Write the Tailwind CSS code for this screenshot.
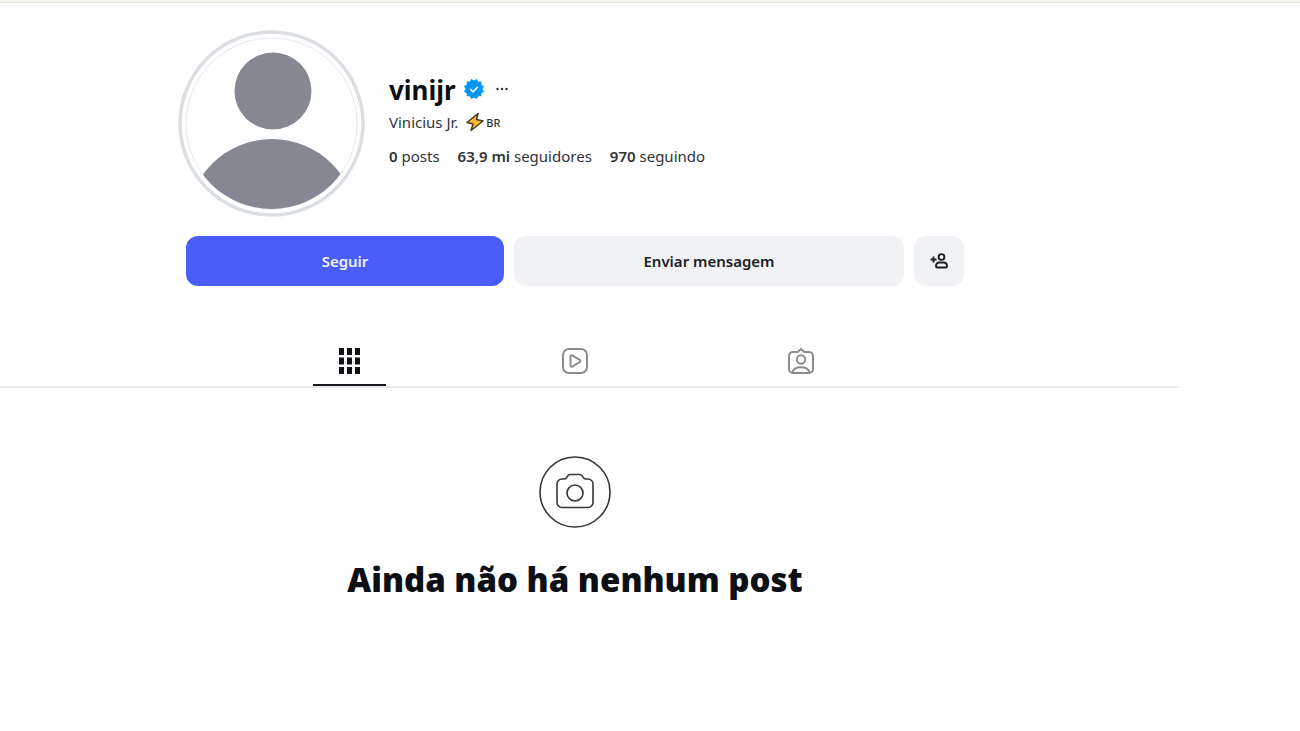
<!DOCTYPE html>
<html lang="pt-BR">
<head>
  <meta charset="UTF-8" />
  <meta name="viewport" content="width=device-width, initial-scale=1.0"/>
  <title>vinijr</title>
  <script src="https://cdn.jsdelivr.net/npm/@tailwindcss/browser@4"></script>
</head>
<body class="bg-white min-h-screen font-['Noto_Sans','Open_Sans',sans-serif] text-[#0c1014]">

  <div class="h-[3px] bg-[#f7f8f0] border-b border-[#e6e8dd]"></div>

  <!-- Profile header -->
  <header class="mr-[150px] pt-[27px]">
    <div class="max-w-[778px] mx-auto">
      <div class="flex gap-6 -ml-2">
        <svg class="w-[187px] h-[187px] shrink-0" viewBox="0 0 187 187" role="img" aria-label="Foto do perfil">
          <defs>
            <clipPath id="face"><circle cx="93.5" cy="93.5" r="85.5" /></clipPath>
          </defs>
          <circle cx="93.5" cy="93.5" r="91.5" fill="#fff" stroke="#dbdfe4" stroke-width="3.5" />
          <circle cx="93.5" cy="93.5" r="85.5" fill="none" stroke="#e6e8eb" stroke-width="1" />
          <circle cx="95" cy="61" r="38.5" fill="#858893" />
          <circle cx="94" cy="194" r="85" fill="#858893" clip-path="url(#face)" />
        </svg>

        <div class="pt-[42px]">
          <div class="flex items-center gap-2 h-9">
            <h1 class="text-[26px] leading-9 font-bold">vinijr</h1>
            <svg class="w-5 h-5 mb-[2px]" viewBox="0 0 40 40" role="img" aria-label="Verificado">
              <path fill="#0095f6" d="M19.998 3.094 14.638 0l-2.972 5.150H5.432v6.354L0 14.640 3.094 20 0 25.359l5.432 3.137v5.905h5.975L14.638 40l5.360-3.094L25.358 40l3.232-5.600h6.162v-6.010L40 25.359 36.905 20 40 14.641l-5.248-3.030v-6.460h-6.419L25.358 0l-5.360 3.094Z" />
              <path fill="none" stroke="#fff" stroke-width="3.4" d="m12.5 20 5.5 5.5 9.500-9.500" />
            </svg>
            <button aria-label="Opções" class="w-5 h-6 mb-[2px] flex items-center justify-center">
              <svg class="w-3 h-3" viewBox="0 0 12 12" fill="#262a2e"><circle cx="1.500" cy="6" r="1.200" /><circle cx="6" cy="6" r="1.200" /><circle cx="10.500" cy="6" r="1.200" /></svg>
            </button>
          </div>

          <p class="flex items-center h-7 text-[15px] text-[#30343a]">
            Vinicius Jr.
            <svg class="w-[18px] h-5 ml-2" viewBox="0 0 18 20" aria-hidden="true">
              <path d="M12 1.500 1 10.500l6 1.500-2 6.500 12-9.500-6.500-1.500z" fill="#fdb92f" stroke="#4a3a22" stroke-width="1.500" stroke-linejoin="round" />
            </svg>
            <span class="text-[11px] font-medium ml-[2px] pt-[2px]">BR</span>
          </p>

          <ul class="flex gap-[18px] pt-2 text-[15px] leading-6 text-[#30343a]">
            <li><b class="font-semibold">0</b> posts</li>
            <li><a href="#"><b class="font-semibold">63,9 mi</b> seguidores</a></li>
            <li><a href="#"><b class="font-semibold">970</b> seguindo</a></li>
          </ul>
        </div>
      </div>

      <div class="flex gap-[10px] mt-[19px] h-[50px] text-[15px] font-semibold">
        <button class="w-[318px] rounded-xl bg-[#4a5df9] text-[#eef0ff]">Seguir</button>
        <button class="flex-1 rounded-xl bg-[#f0f2f5] text-[#1c2024]">Enviar mensagem</button>
        <button class="w-[50px] rounded-xl bg-[#f0f2f5] flex items-center justify-center" aria-label="Pessoas semelhantes">
          <svg class="w-[18px] h-[18px]" viewBox="0 0 18 18" fill="none" stroke="#1c2024" stroke-width="1.900">
            <path d="M3.500 4.500v6M.5 7.500h6" />
            <circle cx="11.500" cy="5" r="2.900" />
            <path d="M6 14.200c0-2.400 1.500-3.700 3.500-3.700h4c2 0 3.500 1.300 3.500 3.700 0 .9-.6 1.300-1.300 1.300H7.300c-.8 0-1.300-.4-1.300-1.300z" />
          </svg>
        </button>
      </div>
    </div>
  </header>

  <!-- Tabs -->
  <nav class="mt-[50px] mr-[121px] border-b-2 border-[#e9eaec]">
    <div class="mr-[29px]">
      <div class="max-w-[677px] mx-auto grid grid-cols-3 justify-items-center">
        <a href="#" aria-label="Posts" class="w-[73px] h-[50px] pt-3 flex justify-center border-b-2 border-[#15191e]">
          <svg class="w-[22px] h-[26px]" viewBox="0 0 22 26" fill="#0c1014">
            <path d="M1 0h5v7H1zM9 0h5v7H9zM17 0h5v7h-5zM1 9.500h5v7H1zM9 9.500h5v7H9zM17 9.500h5v7h-5zM1 19h5v7H1zM9 19h5v7H9zM17 19h5v7h-5z" />
          </svg>
        </a>
        <a href="#" aria-label="Reels" class="w-[73px] h-[50px] pt-3 flex justify-center">
          <svg class="w-[26px] h-[26px]" viewBox="0 0 26 26" fill="none" stroke="#8c8c8c" stroke-width="2" stroke-linejoin="round">
            <rect x="1" y="1" width="24" height="24" rx="6" />
            <path d="M8.500 8.300c0-.9.900-1.400 1.700-1l7.600 4.600c.8.500.8 1.600 0 2.100l-7.600 4.600c-.8.500-1.700-.1-1.700-1z" />
          </svg>
        </a>
        <a href="#" aria-label="Marcações" class="w-[73px] h-[50px] pt-3 flex justify-center">
          <svg class="w-[26px] h-[26px]" viewBox="0 0 26 26" fill="none" stroke="#8c8c8c" stroke-width="2" stroke-linejoin="round">
            <path d="M13 1 9.800 4H5a4 4 0 0 0-4 4V21a4 4 0 0 0 4 4h16a4 4 0 0 0 4-4V8a4 4 0 0 0-4-4h-4.800z" />
            <circle cx="13" cy="11.500" r="4.200" />
            <path d="M4.500 24c1.200-3.200 4.500-4.800 8.500-4.800s7.300 1.600 8.500 4.800" />
          </svg>
        </a>
      </div>
    </div>
  </nav>

  <!-- Empty state -->
  <main class="mr-[150px] pt-[68px] flex flex-col items-center">
    <svg class="w-[72px] h-[72px]" viewBox="0 0 72 72" fill="none" stroke="#34373b" stroke-width="1.600" aria-hidden="true">
      <circle cx="36" cy="36" r="35" />
      <path d="M18 28a5 5 0 0 1 5-5h2.500c1.200 0 1.800-.6 2.300-1.600.8-1.700 1.800-2.900 3.700-2.900h9c1.900 0 2.900 1.200 3.700 2.900.5 1 1.100 1.600 2.300 1.600H49a5 5 0 0 1 5 5v18.500a5 5 0 0 1-5 5H23a5 5 0 0 1-5-5z" />
      <circle cx="36" cy="37" r="8" />
    </svg>
    <h2 class="mt-7 text-[33px] leading-12 font-black">Ainda não há nenhum post</h2>
  </main>

</body>
</html>
